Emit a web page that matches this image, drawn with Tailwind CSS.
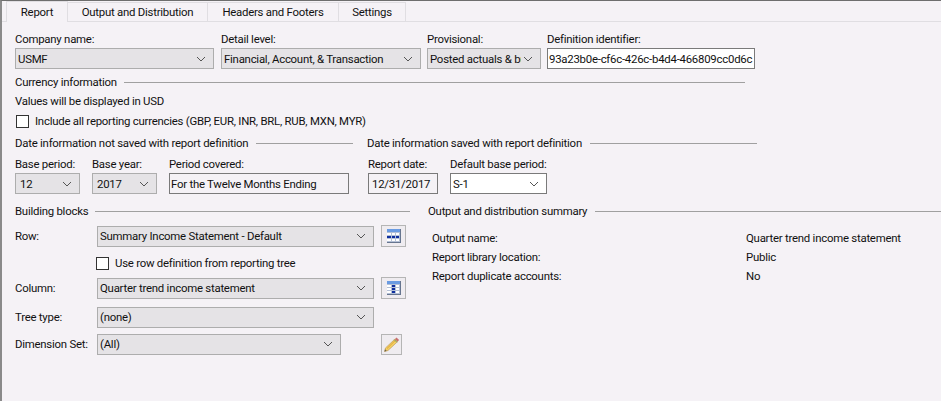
<!DOCTYPE html>
<html lang="en">
  <head>
    <meta charset="UTF-8" />
    <title>Report</title>
    <script src="https://cdn.jsdelivr.net/npm/@tailwindcss/browser@4"></script>
  </head>
  <body class="m-0 bg-[#f5f2f6]">
    <div class="w-[941px] h-[401px] overflow-hidden border-l-2 border-t border-l-[#8a8a8a] border-t-[#6e6e6e] bg-[#f5f2f6] font-['Roboto',sans-serif] text-[11.4px] tracking-[-0.24px] leading-[16px] text-[#111]">
      <!-- tabs -->
      <div class="flex h-[21px] items-end border-b border-[#e0dee2] pl-[4px]">
        <div class="relative z-10 -mb-px flex h-[21px] w-[62px] items-center justify-center border border-b-0 border-[#e0dee2] bg-[#f5f2f6]">Report</div>
        <div class="flex h-[19px] w-[140px] items-center justify-center border-r border-t border-[#e0dee2]">Output and Distribution</div>
        <div class="flex h-[19px] w-[131px] items-center justify-center border-r border-t border-[#e0dee2]">Headers and Footers</div>
        <div class="flex h-[19px] w-[67px] items-center justify-center border-r border-t border-[#e0dee2]">Settings</div>
      </div>

      <div class="pl-[13px]">
        <!-- top fields -->
        <div class="mt-[9px] flex">
          <div class="w-[206px]">
            <div>Company name:</div>
            <div class="mt-px flex h-[21px] w-[199px] items-center justify-between border border-[#adadad] bg-[#e5e3e6] pl-[2px] pr-[7px]">
              <span>USMF</span>
              <svg width="10" height="6" viewBox="0 0 10 6" fill="none" stroke="#555" stroke-width="1"><path d="M1 1l4 4 4-4" /></svg>
            </div>
          </div>
          <div class="w-[206px]">
            <div>Detail level:</div>
            <div class="mt-px flex h-[21px] w-[200px] items-center justify-between border border-[#adadad] bg-[#e5e3e6] pl-[2px] pr-[7px]">
              <span>Financial, Account, &amp; Transaction</span>
              <svg width="10" height="6" viewBox="0 0 10 6" fill="none" stroke="#555" stroke-width="1"><path d="M1 1l4 4 4-4" /></svg>
            </div>
          </div>
          <div class="w-[120px]">
            <div>Provisional:</div>
            <div class="mt-px flex h-[21px] w-[114px] items-center justify-between border border-[#adadad] bg-[#e5e3e6] pl-[2px] pr-[7px]">
              <span class="w-[91px] overflow-hidden whitespace-nowrap">Posted actuals &amp; budget</span>
              <svg width="10" height="6" viewBox="0 0 10 6" fill="none" stroke="#555" stroke-width="1"><path d="M1 1l4 4 4-4" /></svg>
            </div>
          </div>
          <div class="w-[208px]">
            <div>Definition identifier:</div>
            <div class="mt-px flex h-[21px] items-center whitespace-nowrap border border-[#7a7a7a] bg-white pl-[1px]">93a23b0e-cf6c-426c-b4d4-466809cc0d6c</div>
          </div>
        </div>

        <!-- currency -->
        <div class="mt-[5px] flex w-[730px] items-center gap-[7px]">
          <span>Currency information</span>
          <div class="h-px flex-1 bg-[#a0a0a0]"></div>
        </div>
        <div class="mt-[3px]">Values will be displayed in USD</div>
        <div class="mt-[4px] flex items-center gap-[6px] pl-px">
          <div class="h-[13px] w-[13px] border border-[#333] bg-white"></div>
          <span>Include all reporting currencies (GBP, EUR, INR, BRL, RUB, MXN, MYR)</span>
        </div>

        <!-- dates -->
        <div class="mt-[6px] flex">
          <div class="w-[352px]">
            <div class="flex w-[338px] items-center gap-[8px]">
              <span>Date information not saved with report definition</span>
              <div class="h-px flex-1 bg-[#a0a0a0]"></div>
            </div>
            <div class="mt-[5px] flex">
              <div class="w-[77px]">
                <div>Base period:</div>
                <div class="mt-px flex h-[21px] w-[65px] items-center justify-between border border-[#adadad] bg-[#e5e3e6] pl-[4px] pr-[7px]">
                  <span>12</span>
                  <svg width="10" height="6" viewBox="0 0 10 6" fill="none" stroke="#555" stroke-width="1"><path d="M1 1l4 4 4-4" /></svg>
                </div>
              </div>
              <div class="w-[77px]">
                <div>Base year:</div>
                <div class="mt-px flex h-[21px] w-[65px] items-center justify-between border border-[#adadad] bg-[#e5e3e6] pl-[4px] pr-[7px]">
                  <span>2017</span>
                  <svg width="10" height="6" viewBox="0 0 10 6" fill="none" stroke="#555" stroke-width="1"><path d="M1 1l4 4 4-4" /></svg>
                </div>
              </div>
              <div>
                <div>Period covered:</div>
                <div class="mt-px flex h-[21px] w-[180px] items-center border border-[#7a7a7a] bg-[#f5f2f6] pl-[1px]">For the Twelve Months Ending</div>
              </div>
            </div>
          </div>
          <div>
            <div class="flex w-[390px] items-center gap-[8px]">
              <span>Date information saved with report definition</span>
              <div class="h-px flex-1 bg-[#a0a0a0]"></div>
            </div>
            <div class="mt-[5px] flex pl-px">
              <div class="w-[82px]">
                <div>Report date:</div>
                <div class="mt-px flex h-[21px] w-[70px] items-center border border-[#7a7a7a] bg-[#f5f2f6] pl-[3px]">12/31/2017</div>
              </div>
              <div>
                <div>Default base period:</div>
                <div class="mt-px flex h-[21px] w-[97px] items-center justify-between border border-[#7a7a7a] bg-white pl-[2px] pr-[7px]">
                  <span>S-1</span>
                  <svg width="10" height="6" viewBox="0 0 10 6" fill="none" stroke="#555" stroke-width="1"><path d="M1 1l4 4 4-4" /></svg>
                </div>
              </div>
            </div>
          </div>
        </div>

        <!-- building blocks and summary -->
        <div class="mt-[9px] flex">
          <div class="w-[413px]">
            <div class="flex w-[395px] items-center gap-[7px]">
              <span>Building blocks</span>
              <div class="h-px flex-1 bg-[#a0a0a0]"></div>
            </div>

            <div class="mt-[6px] flex h-[22px] items-center">
              <span class="w-[82px]">Row:</span>
              <div class="flex h-[21px] w-[277px] items-center justify-between border border-[#adadad] bg-[#e5e3e6] pl-[2px] pr-[7px]">
                <span>Summary Income Statement - Default</span>
                <svg width="10" height="6" viewBox="0 0 10 6" fill="none" stroke="#555" stroke-width="1"><path d="M1 1l4 4 4-4" /></svg>
              </div>
              <div class="ml-[7px] flex h-[22px] w-[25px] items-center justify-center border border-[#b5b5b5] bg-[#efecf0]">
                <svg width="14" height="14" viewBox="0 0 14 14">
                  <rect width="14" height="14" fill="#b4c0d6" />
                  <rect x="13" width="1" height="14" fill="#66758f" />
                  <rect y="13" width="14" height="1" fill="#66758f" />
                  <rect width="13" height="3" fill="#6a9be2" />
                  <path d="M0 4h4v2H0zM5 4h3v2H5zM9 4h3v2H9zM0 10h4v2H0zM5 10h3v2H5zM9 10h3v2H9z" fill="#fff" />
                  <path d="M0 7h4v2H0zM5 7h3v2H5zM9 7h3v2H9z" fill="#0f2f9e" />
                </svg>
              </div>
            </div>

            <div class="mt-[8px] flex items-center gap-[6px] pl-[81px]">
              <div class="h-[13px] w-[13px] border border-[#333] bg-white"></div>
              <span>Use row definition from reporting tree</span>
            </div>

            <div class="mt-[6px] flex h-[22px] items-center">
              <span class="w-[82px]">Column:</span>
              <div class="flex h-[21px] w-[277px] items-center justify-between border border-[#adadad] bg-[#e5e3e6] pl-[2px] pr-[7px]">
                <span>Quarter trend income statement</span>
                <svg width="10" height="6" viewBox="0 0 10 6" fill="none" stroke="#555" stroke-width="1"><path d="M1 1l4 4 4-4" /></svg>
              </div>
              <div class="ml-[7px] flex h-[22px] w-[25px] items-center justify-center border border-[#b5b5b5] bg-[#efecf0]">
                <svg width="14" height="14" viewBox="0 0 14 14">
                  <rect width="14" height="14" fill="#b4c0d6" />
                  <rect x="13" width="1" height="14" fill="#66758f" />
                  <rect y="13" width="14" height="1" fill="#66758f" />
                  <rect width="13" height="3" fill="#6a9be2" />
                  <path d="M0 4h4v2H0zM0 7h4v2H0zM0 10h4v2H0zM9 4h3v2H9zM9 7h3v2H9zM9 10h3v2H9z" fill="#fff" />
                  <path d="M5 4h3v2H5zM5 7h3v2H5zM5 10h3v2H5z" fill="#0f2f9e" />
                </svg>
              </div>
            </div>

            <div class="mt-[7px] flex h-[22px] items-center">
              <span class="w-[82px]">Tree type:</span>
              <div class="flex h-[21px] w-[277px] items-center justify-between border border-[#adadad] bg-[#e5e3e6] pl-[2px] pr-[7px]">
                <span>(none)</span>
                <svg width="10" height="6" viewBox="0 0 10 6" fill="none" stroke="#555" stroke-width="1"><path d="M1 1l4 4 4-4" /></svg>
              </div>
            </div>

            <div class="mt-[5px] flex h-[22px] items-center">
              <span class="w-[82px]">Dimension Set:</span>
              <div class="flex h-[21px] w-[244px] items-center justify-between border border-[#adadad] bg-[#e5e3e6] pl-[2px] pr-[7px]">
                <span>(All)</span>
                <svg width="10" height="6" viewBox="0 0 10 6" fill="none" stroke="#555" stroke-width="1"><path d="M1 1l4 4 4-4" /></svg>
              </div>
              <div class="ml-[40px] flex h-[21px] w-[21px] items-center justify-center border border-[#b5b5b5] bg-[#efecf0]">
                <svg width="17" height="17" viewBox="0 0 17 17">
                  <path d="M1.500 15.500l1-3.600L12 3l2.600 2.600L5 14.500z" fill="#f3cf63" stroke="#a9823a" stroke-width="0.500" />
                  <path d="M4 12.500L12.700 4" stroke="#d99a2b" stroke-width="0.800" />
                  <path d="M12 3l1.500-1.500 2.600 2.600-1.500 1.500z" fill="#c96f6f" />
                  <path d="M11.300 3.700l2.600 2.600" stroke="#6f9a6f" stroke-width="1" />
                  <path d="M1.500 15.500l0.600-2.200 1.600 1.600z" fill="#6b5f4a" />
                </svg>
              </div>
            </div>
          </div>

          <div class="flex-1">
            <div class="flex items-center gap-[8px]">
              <span>Output and distribution summary</span>
              <div class="h-px flex-1 bg-[#a0a0a0]"></div>
            </div>
            <div class="mt-[11px] flex flex-col gap-[3px] pl-[4px]">
              <div class="flex"><span class="w-[314px]">Output name:</span><span>Quarter trend income statement</span></div>
              <div class="flex"><span class="w-[314px]">Report library location:</span><span>Public</span></div>
              <div class="flex"><span class="w-[314px]">Report duplicate accounts:</span><span>No</span></div>
            </div>
          </div>
        </div>
      </div>
    </div>
  </body>
</html>
